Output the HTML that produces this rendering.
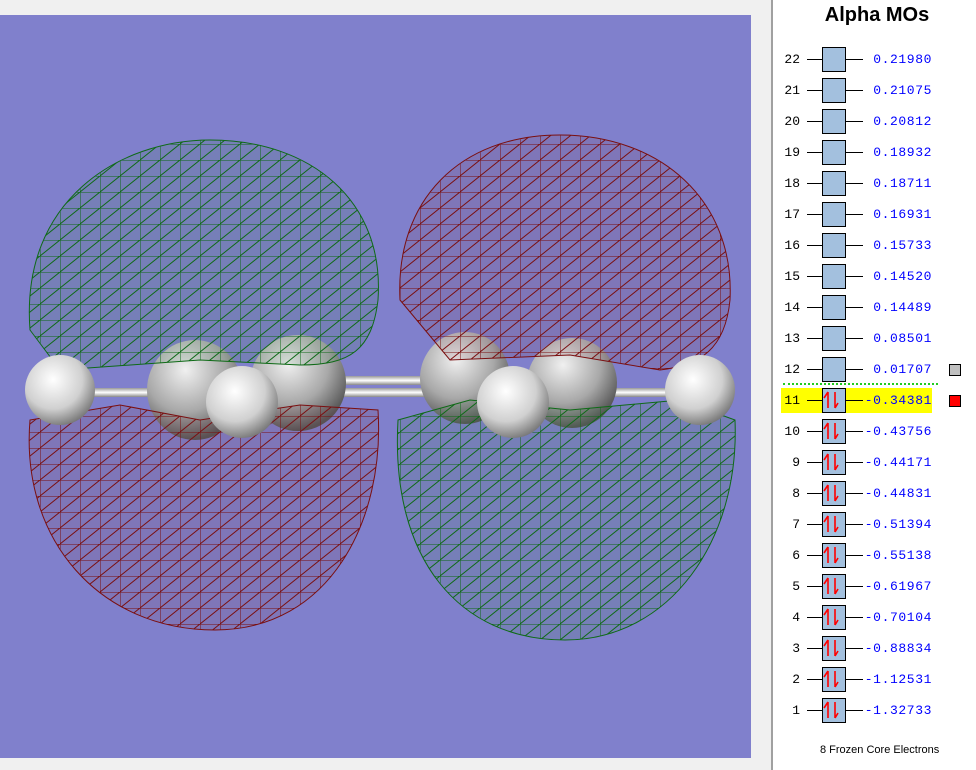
<!DOCTYPE html>
<html><head><meta charset="utf-8"><style>
body{margin:0;width:976px;height:770px;background:#f0f0f0;position:relative;overflow:hidden;font-family:"Liberation Sans",sans-serif}
#vp{position:absolute;left:0;top:15px;width:751px;height:743px;background:#8080cc}
#sep{position:absolute;left:771px;top:0;width:2px;height:770px;background:#a0a0a0}
#rp{position:absolute;left:773px;top:0;width:203px;height:770px;background:#fff}
h1{position:absolute;left:0;width:208px;top:4px;margin:0;font-size:20px;font-weight:bold;text-align:center;color:#000}
.r{position:absolute;left:0;width:203px;height:24px}
.n{position:absolute;right:176px;top:5px;font:13px "Liberation Mono",monospace;color:#000}
.l1{position:absolute;left:34px;width:15px;top:12px;height:1px;background:#000}
.l2{position:absolute;left:73px;width:17px;top:12px;height:1px;background:#000}
.b{position:absolute;left:49px;top:0;width:22px;height:23px;border:1px solid #000;background:#a3c0de}
.v{position:absolute;right:44px;top:5px;font:13px "Liberation Mono",monospace;color:#0000ff;letter-spacing:0.6px}
</style></head><body>
<div id="vp"><svg width="751" height="743" viewBox="0 15 751 743">
<defs>
<pattern id="pg" width="20" height="16" patternUnits="userSpaceOnUse"><path d="M0 0H20M0 0V16M0 16L20 0" stroke="#0e6a16" stroke-width="1" fill="none"/></pattern>
<pattern id="pr" width="20" height="16" patternUnits="userSpaceOnUse"><path d="M0 0H20M0 0V16M0 16L20 0" stroke="#7a0f10" stroke-width="1" fill="none"/></pattern>
<radialGradient id="sw" cx="0.4" cy="0.35" r="0.7"><stop offset="0" stop-color="#fff"/><stop offset="0.6" stop-color="#d0d0d0"/><stop offset="1" stop-color="#707070"/></radialGradient>
<radialGradient id="sc" cx="0.4" cy="0.3" r="0.7"><stop offset="0" stop-color="#f0f0f0"/><stop offset="0.6" stop-color="#a8a8a8"/><stop offset="1" stop-color="#555"/></radialGradient>
<linearGradient id="bd" x1="0" y1="0" x2="0" y2="1"><stop offset="0" stop-color="#999"/><stop offset="0.5" stop-color="#fff"/><stop offset="1" stop-color="#888"/></linearGradient>
</defs>
<rect x="340" y="376" width="90" height="9" fill="url(#bd)"/>
<rect x="90" y="388" width="620" height="9" fill="url(#bd)"/>
<ellipse cx="195" cy="390" rx="48" ry="50" fill="url(#sc)"/>
<ellipse cx="298" cy="383" rx="48" ry="48" fill="url(#sc)"/>
<ellipse cx="465" cy="378" rx="45" ry="46" fill="url(#sc)"/>
<ellipse cx="572" cy="383" rx="45" ry="45" fill="url(#sc)"/>
<path d="M30 330 C20 200 120 140 210 140 C310 140 385 200 378 300 C372 350 350 365 300 365 L200 360 L60 370 Z" fill="#3a7a4a" fill-opacity="0.15"/>
<path d="M30 330 C20 200 120 140 210 140 C310 140 385 200 378 300 C372 350 350 365 300 365 L200 360 L60 370 Z" fill="url(#pg)" stroke="#0e6a16"/>
<path d="M30 420 L120 405 L200 420 L300 405 L378 410 C385 520 330 630 215 630 C100 630 20 540 30 420 Z" fill="#7a3a4a" fill-opacity="0.15"/>
<path d="M30 420 L120 405 L200 420 L300 405 L378 410 C385 520 330 630 215 630 C100 630 20 540 30 420 Z" fill="url(#pr)" stroke="#7a0f10"/>
<path d="M400 300 C395 200 460 135 560 135 C660 135 735 200 730 300 C725 350 700 365 660 370 L570 355 L450 360 Z" fill="#7a3a4a" fill-opacity="0.15"/>
<path d="M400 300 C395 200 460 135 560 135 C660 135 735 200 730 300 C725 350 700 365 660 370 L570 355 L450 360 Z" fill="url(#pr)" stroke="#7a0f10"/>
<path d="M398 420 L470 400 L570 410 L680 400 L735 420 C740 540 670 640 565 640 C460 640 390 560 398 420 Z" fill="#3a7a4a" fill-opacity="0.15"/>
<path d="M398 420 L470 400 L570 410 L680 400 L735 420 C740 540 670 640 565 640 C460 640 390 560 398 420 Z" fill="url(#pg)" stroke="#0e6a16"/>
<circle cx="60" cy="390" r="35" fill="url(#sw)"/>
<circle cx="242" cy="402" r="36" fill="url(#sw)"/>
<circle cx="513" cy="402" r="36" fill="url(#sw)"/>
<circle cx="700" cy="390" r="35" fill="url(#sw)"/>
</svg></div>
<div id="sep"></div>
<div id="rp">
<h1>Alpha MOs</h1>
<div style="position:absolute;left:10px;top:383px;width:155px;border-top:2px dotted #22cc22"></div>
<div style="position:absolute;left:8px;top:388px;width:151px;height:25px;background:#ffff00"></div>
<div class="r" style="top:47px"><span class="n">22</span><i class="l1"></i><i class="b"></i><i class="l2"></i><span class="v">0.21980</span></div>
<div class="r" style="top:78px"><span class="n">21</span><i class="l1"></i><i class="b"></i><i class="l2"></i><span class="v">0.21075</span></div>
<div class="r" style="top:109px"><span class="n">20</span><i class="l1"></i><i class="b"></i><i class="l2"></i><span class="v">0.20812</span></div>
<div class="r" style="top:140px"><span class="n">19</span><i class="l1"></i><i class="b"></i><i class="l2"></i><span class="v">0.18932</span></div>
<div class="r" style="top:171px"><span class="n">18</span><i class="l1"></i><i class="b"></i><i class="l2"></i><span class="v">0.18711</span></div>
<div class="r" style="top:202px"><span class="n">17</span><i class="l1"></i><i class="b"></i><i class="l2"></i><span class="v">0.16931</span></div>
<div class="r" style="top:233px"><span class="n">16</span><i class="l1"></i><i class="b"></i><i class="l2"></i><span class="v">0.15733</span></div>
<div class="r" style="top:264px"><span class="n">15</span><i class="l1"></i><i class="b"></i><i class="l2"></i><span class="v">0.14520</span></div>
<div class="r" style="top:295px"><span class="n">14</span><i class="l1"></i><i class="b"></i><i class="l2"></i><span class="v">0.14489</span></div>
<div class="r" style="top:326px"><span class="n">13</span><i class="l1"></i><i class="b"></i><i class="l2"></i><span class="v">0.08501</span></div>
<div class="r" style="top:357px"><span class="n">12</span><i class="l1"></i><i class="b"></i><i class="l2"></i><span class="v">0.01707</span></div>
<div style="position:absolute;left:176px;top:364px;width:10px;height:10px;border:1px solid #000;background:#c0c0c0"></div>
<div class="r" style="top:388px"><span class="n">11</span><i class="l1"></i><i class="b"></i><i class="l2"></i><span class="v">-0.34381</span></div>
<div style="position:absolute;left:176px;top:395px;width:10px;height:10px;border:1px solid #000;background:#ff0000"></div>
<div class="r" style="top:419px"><span class="n">10</span><i class="l1"></i><i class="b"></i><i class="l2"></i><span class="v">-0.43756</span></div>
<div class="r" style="top:450px"><span class="n">9</span><i class="l1"></i><i class="b"></i><i class="l2"></i><span class="v">-0.44171</span></div>
<div class="r" style="top:481px"><span class="n">8</span><i class="l1"></i><i class="b"></i><i class="l2"></i><span class="v">-0.44831</span></div>
<div class="r" style="top:512px"><span class="n">7</span><i class="l1"></i><i class="b"></i><i class="l2"></i><span class="v">-0.51394</span></div>
<div class="r" style="top:543px"><span class="n">6</span><i class="l1"></i><i class="b"></i><i class="l2"></i><span class="v">-0.55138</span></div>
<div class="r" style="top:574px"><span class="n">5</span><i class="l1"></i><i class="b"></i><i class="l2"></i><span class="v">-0.61967</span></div>
<div class="r" style="top:605px"><span class="n">4</span><i class="l1"></i><i class="b"></i><i class="l2"></i><span class="v">-0.70104</span></div>
<div class="r" style="top:636px"><span class="n">3</span><i class="l1"></i><i class="b"></i><i class="l2"></i><span class="v">-0.88834</span></div>
<div class="r" style="top:667px"><span class="n">2</span><i class="l1"></i><i class="b"></i><i class="l2"></i><span class="v">-1.12531</span></div>
<div class="r" style="top:698px"><span class="n">1</span><i class="l1"></i><i class="b"></i><i class="l2"></i><span class="v">-1.32733</span></div>
<svg style="position:absolute;left:0;top:0" width="203" height="770">
<defs><g id="ar"><path d="M55 -8 V8 M55 -8 L51 -2 M62 8 V-8 M62 8 L65 3" stroke="#ff0000" stroke-width="1.6" fill="none"/></g></defs>
<use href="#ar" y="400"/><use href="#ar" y="431"/><use href="#ar" y="462"/><use href="#ar" y="493"/><use href="#ar" y="524"/><use href="#ar" y="555"/><use href="#ar" y="586"/><use href="#ar" y="617"/><use href="#ar" y="648"/><use href="#ar" y="679"/><use href="#ar" y="710"/>
</svg>
<div style="position:absolute;left:47px;top:744px;font-size:11px;color:#000">8 Frozen Core Electrons</div>
</div>
</body></html>
